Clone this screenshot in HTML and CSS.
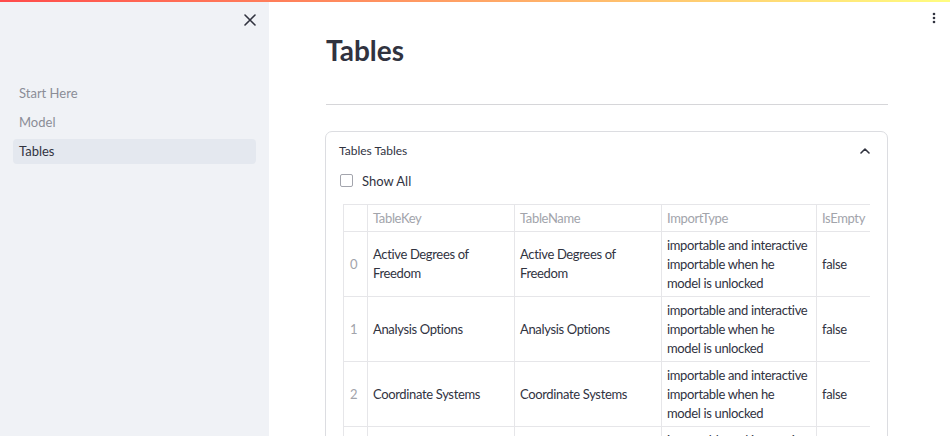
FILE: index.html
```html
<!DOCTYPE html>
<html>
<head>
<meta charset="utf-8">
<link rel="stylesheet" href="styles.css">
</head>
<body>
<div class="topbar"></div>
<div class="app">
  <aside class="sidebar">
    <div class="sidebar-head">
      <button class="close-btn" aria-label="Close">
        <svg width="12" height="12" viewBox="0 0 12 12"><path d="M1 1L11 11M11 1L1 11" stroke="#31333f" stroke-width="1.6" stroke-linecap="round"/></svg>
      </button>
    </div>
    <nav class="nav">
      <a class="nav-item">Start Here</a>
      <a class="nav-item">Model</a>
      <a class="nav-item active">Tables</a>
    </nav>
  </aside>
  <main class="main">
    <button class="menu-btn" aria-label="Menu">
      <svg width="4" height="12" viewBox="0 0 4 12"><circle cx="2" cy="2" r="1.3" fill="#31333f"/><circle cx="2" cy="6" r="1.3" fill="#31333f"/><circle cx="2" cy="10" r="1.3" fill="#31333f"/></svg>
    </button>
    <div class="content">
      <h1 class="title">Tables</h1>
      <hr class="divider">
      <section class="expander">
        <div class="exp-head">
          <span class="exp-label">Tables Tables</span>
          <svg class="chev" width="10" height="6" viewBox="0 0 10 6"><path d="M1 5L5 1L9 5" fill="none" stroke="#31333f" stroke-width="1.6" stroke-linecap="round" stroke-linejoin="round"/></svg>
        </div>
        <div class="exp-body">
          <label class="check"><span class="box"></span><span class="check-label">Show All</span></label>
          <div class="table-wrap">
            <table class="df">
              <colgroup><col class="c0"><col class="c1"><col class="c2"><col class="c3"><col class="c4"></colgroup>
              <thead>
                <tr><th></th><th>TableKey</th><th>TableName</th><th>ImportType</th><th>IsEmpty</th></tr>
              </thead>
              <tbody>
                <tr><td class="idx">0</td><td>Active Degrees of Freedom</td><td>Active Degrees of Freedom</td><td>importable and interactive importable when he model is unlocked</td><td>false</td></tr>
                <tr><td class="idx">1</td><td>Analysis Options</td><td>Analysis Options</td><td>importable and interactive importable when he model is unlocked</td><td>false</td></tr>
                <tr><td class="idx">2</td><td>Coordinate Systems</td><td>Coordinate Systems</td><td>importable and interactive importable when he model is unlocked</td><td>false</td></tr>
                <tr><td class="idx">3</td><td>Grid Lines</td><td>Grid Lines</td><td>importable and interactive importable when he model is unlocked</td><td>false</td></tr>
              </tbody>
            </table>
          </div>
        </div>
      </section>
    </div>
  </main>
</div>
</body>
</html>
```
FILE: styles.css
```css
* { box-sizing: border-box; }
html, body { margin: 0; padding: 0; height: 100%; overflow: hidden; }
body {
  font-family: "Lato", "Noto Sans", sans-serif;
  color: #31333f;
  background: #fff;
}
.topbar {
  position: absolute;
  top: 0; left: 0; right: 0;
  height: 2px;
  background: linear-gradient(90deg, #ff4b4b, #fffd80);
  z-index: 5;
}
.app { display: flex; height: 436px; overflow: hidden; }
.sidebar {
  width: 269px;
  flex: none;
  background: #f0f2f6;
  padding: 0 13px;
}
.sidebar-head {
  display: flex;
  justify-content: flex-end;
  padding-top: 14px;
  height: 81px;
}
.close-btn {
  border: 0; background: none; padding: 0;
  width: 12px; height: 12px;
  display: flex;
}
.nav { display: flex; flex-direction: column; gap: 4px; }
.nav-item {
  display: block;
  height: 25px;
  line-height: 25px;
  padding-left: 6px;
  font-size: 13px;
  color: #8b8d96;
  border-radius: 4px;
}
.nav-item.active { background: #e4e8ef; color: #31333f; }
.main { flex: 1; position: relative; }
.menu-btn {
  position: absolute;
  top: 12px; right: 14px;
  border: 0; background: none; padding: 0;
  width: 4px; height: 12px;
  display: flex;
}
.content { padding: 30px 0 0 57px; width: 620px; }
.title {
  margin: 0;
  font-size: 28px;
  font-weight: 700;
  line-height: 40px;
  height: 40px;
}
.divider {
  margin: 34px 0 26px;
  border: 0;
  border-top: 1px solid #d6d6d9;
  width: 562px;
}
.expander {
  width: 563px;
  margin-left: -1px;
  border: 1px solid #dcdde1;
  border-radius: 7px;
  height: 330px;
  overflow: hidden;
}
.exp-head {
  display: flex;
  align-items: center;
  justify-content: space-between;
  padding: 0 17px 0 13px;
  height: 37px;
}
.exp-label { font-size: 12px; }
.chev { display: block; }
.exp-body { padding: 0 0 0 14px; }
.check { display: flex; align-items: center; height: 23px; }
.box {
  width: 13px; height: 13px;
  border: 1px solid #a3a5ad;
  border-radius: 2px;
  background: #fff;
  margin-right: 9px;
}
.check-label { font-size: 13px; }
.table-wrap { margin-top: 12px; margin-left: 3px; width: 527px; overflow: hidden; }
.df {
  border-collapse: collapse;
  table-layout: fixed;
  width: 527px;
  font-size: 13px;
  letter-spacing: -0.35px;
}
.c0 { width: 24px; } .c1 { width: 147px; } .c2 { width: 147px; } .c3 { width: 155px; } .c4 { width: 54px; }
.df th, .df td {
  border: 1px solid #e6e6e9;
  padding: 0 3px 0 5px;
  text-align: left;
  vertical-align: middle;
  line-height: 19px;
  overflow: hidden;
}
.df td { padding-right: 8px; }
.df th { font-weight: 400; color: #a2a4ab; height: 27px; white-space: nowrap; }
.df td { height: 65px; }
.df td.idx { color: #a2a4ab; padding-left: 6px; padding-right: 3px; }
```
